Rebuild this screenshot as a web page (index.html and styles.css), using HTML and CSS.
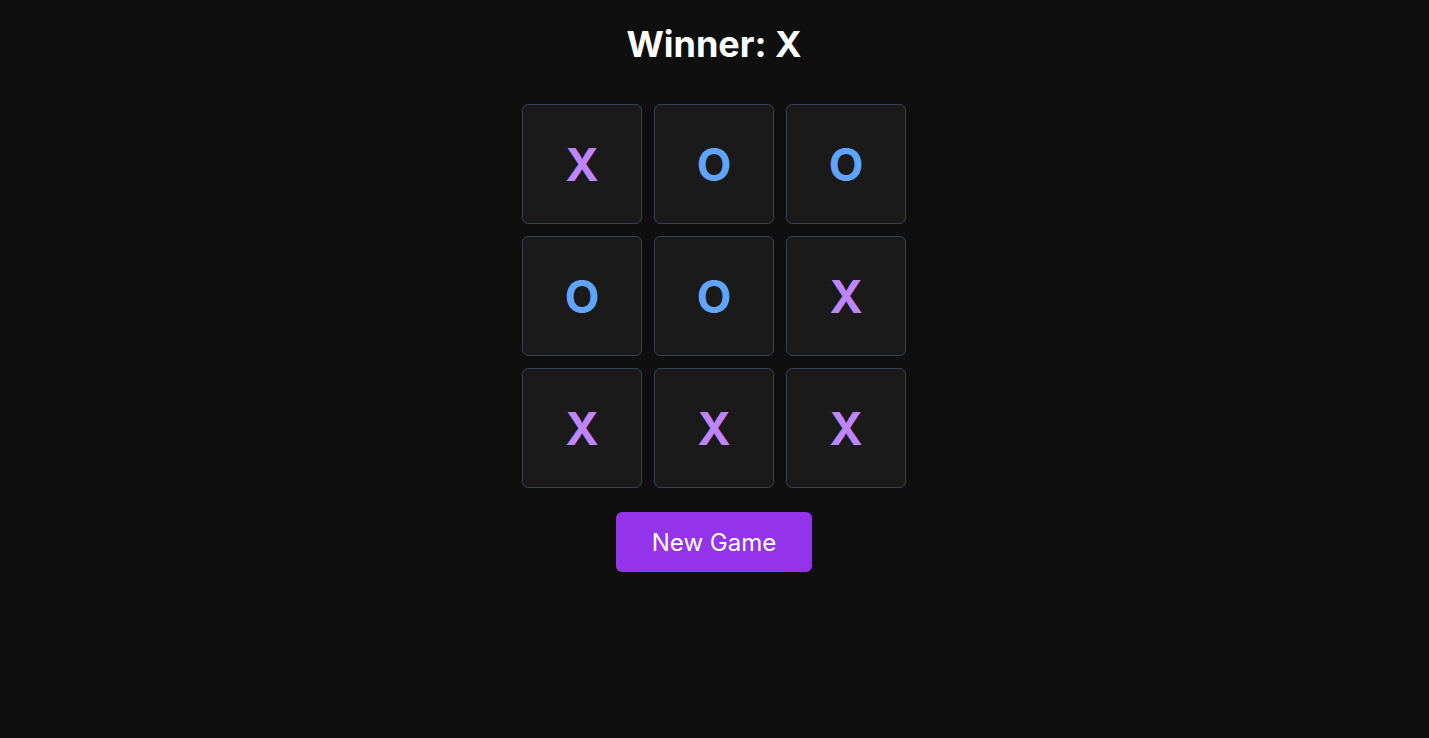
FILE: index.html
```html
<!DOCTYPE html>
<html lang="en">
<head>
<meta charset="utf-8">
<title>Tic Tac Toe</title>
<link rel="stylesheet" href="styles.css">
</head>
<body>
<main class="game">
  <h1 class="status">Winner: X</h1>
  <div class="board">
    <button class="cell x">X</button>
    <button class="cell o">O</button>
    <button class="cell o">O</button>
    <button class="cell o">O</button>
    <button class="cell o">O</button>
    <button class="cell x">X</button>
    <button class="cell x">X</button>
    <button class="cell x">X</button>
    <button class="cell x">X</button>
  </div>
  <button class="reset">New Game</button>
</main>
</body>
</html>
```

FILE: styles.css
```css
html, body {
  margin: 0;
  padding: 0;
  background: #0f0f0f;
  height: 100%;
}
body {
  font-family: Inter, "Liberation Sans", sans-serif;
  color: #ffffff;
}
.game {
  display: flex;
  flex-direction: column;
  align-items: center;
  padding-top: 22px;
  padding-right: 1px;
}
.status {
  margin: 0;
  font-size: 36px;
  line-height: 44px;
  font-weight: 700;
  letter-spacing: 0;
}
.board {
  margin-top: 38px;
  display: grid;
  grid-template-columns: repeat(3, 120px);
  grid-auto-rows: 120px;
  gap: 12px;
}
.cell {
  box-sizing: border-box;
  background: #1a1a1a;
  border: 1px solid #374151;
  border-radius: 6px;
  font-family: Inter, "Liberation Sans", sans-serif;
  font-size: 45px;
  font-weight: 700;
  padding: 0;
  display: flex;
  align-items: center;
  justify-content: center;
}
.cell.x { color: #c084fc; }
.cell.o { color: #60a5fa; }
.reset {
  margin-top: 24px;
  width: 196px;
  height: 60px;
  background: #9333ea;
  color: #ffffff;
  border: none;
  border-radius: 6px;
  font-family: Inter, "Liberation Sans", sans-serif;
  font-size: 24px;
  font-weight: 400;
}
```
